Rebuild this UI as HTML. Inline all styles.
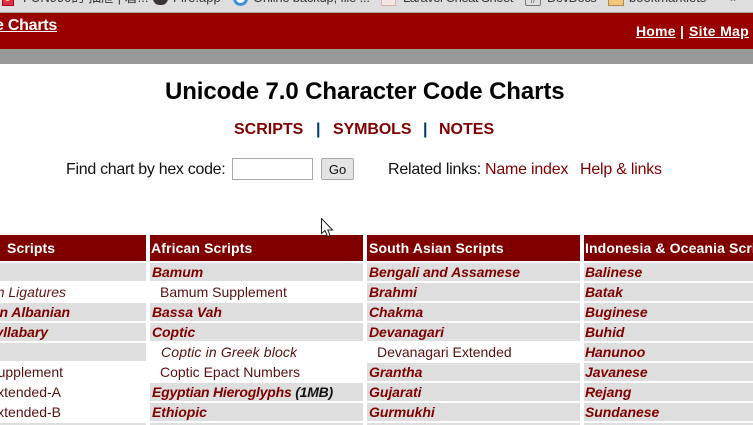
<!DOCTYPE html>
<html><head><meta charset="utf-8"><style>
html,body{margin:0;padding:0;width:753px;height:425px;overflow:hidden;background:#fff;position:relative;font-family:"Liberation Sans",Arial,sans-serif}
.a{position:absolute;white-space:nowrap}
.bar{left:0;top:0;width:753px;height:12px;background:#dedede;border-bottom:1px solid #a9a9a9;overflow:hidden}
.bm{position:absolute;top:-10px;font:13px/16px "Liberation Sans","Noto Sans CJK KR",sans-serif;color:#333;white-space:nowrap}
.col{position:absolute;top:235px;height:190px;overflow:hidden}
.h{position:absolute;left:0;right:0;top:0;height:26px;background:#800000;color:#fff;font:bold 14px/26px "Liberation Sans",sans-serif;padding-left:2px;box-sizing:border-box;white-space:nowrap;letter-spacing:.12px}
.r{position:absolute;left:0;right:0;height:18px;font:14px/18px "Liberation Sans",sans-serif;color:#800000;white-space:nowrap;padding-left:2px;box-sizing:border-box}
.g{background:#dedede;font-weight:bold;font-style:italic;letter-spacing:-.05px}
.s{padding-left:10px;color:#5a1010}
.i{font-style:italic}
.ra{text-align:right;padding-left:0;left:-40px}
.nav{font:bold 16px/20px "Liberation Sans",sans-serif;color:#800000}
.t{font:16px/20px "Liberation Sans",sans-serif;letter-spacing:-.22px;top:160px}
</style></head><body>
<div class="a bar">
<div style="position:absolute;left:2px;top:-5px;width:10px;height:9px;background:#d8304a;border:1px solid #a02"></div>
<div style="position:absolute;left:5px;top:-3px;width:5px;height:4px;border-radius:50%;background:#e8d890"></div>
<div class="bm" style="left:23px">FUN990的 抽屉 | 着...</div>
<div style="position:absolute;left:153px;top:-8px;width:15px;height:13px;border-radius:8px;background:#3a3533"></div>
<div class="bm" style="left:173px">Fire.app</div>
<div style="position:absolute;left:233px;top:-9px;width:9px;height:9px;border-radius:50%;border:3px solid #3d8fdc;background:#fff"></div>
<div class="bm" style="left:253px;letter-spacing:-.2px">Online backup, file ...</div>
<div style="position:absolute;left:381px;top:-3px;width:13px;height:7px;background:#f4e6e2;border:1px solid #d9b0a8"></div>
<div class="bm" style="left:403px;letter-spacing:-.45px">Laravel Cheat Sheet</div>
<div style="position:absolute;left:525px;top:-4px;width:14px;height:8px;border:1px solid #777;border-radius:2px;font:8px/8px sans-serif;color:#555;text-align:center">//</div>
<div class="bm" style="left:547px;letter-spacing:-.5px">DevDocs</div>
<div style="position:absolute;left:608px;top:-3px;width:14px;height:7px;background:#f4c77e;border:1px solid #b08a4a"></div>
<div class="bm" style="left:629px">bookmarklets</div>
<div class="bm" style="left:730px;color:#666">»</div>
</div>
<div class="a" style="left:0;top:13px;width:753px;height:36px;background:#990000"></div>
<div class="a" style="left:0;top:49px;width:753px;height:15px;background:#999"></div>
<div class="a" style="left:-5px;top:16px;font:bold 16px/20px 'Liberation Sans',sans-serif;color:#fff;text-decoration:underline;letter-spacing:-.25px">e Charts</div>
<div class="a" style="left:636px;top:22px;font:bold 14px/18px 'Liberation Sans',sans-serif;color:#fff;text-decoration:underline;letter-spacing:.2px">Home</div>
<div class="a" style="left:680px;top:22px;font:bold 14px/18px 'Liberation Sans',sans-serif;color:#fff">|</div>
<div class="a" style="left:689px;top:22px;font:bold 14px/18px 'Liberation Sans',sans-serif;color:#fff;text-decoration:underline;letter-spacing:.3px">Site Map</div>
<div class="a" style="left:165px;top:77px;font:bold 24px/30px 'Liberation Sans',sans-serif;color:#000;letter-spacing:-.1px">Unicode 7.0 Character Code Charts</div>
<div class="a nav" style="left:234px;top:120px">SCRIPTS</div>
<div class="a nav" style="left:316px;top:120px;color:#003a6e">|</div>
<div class="a nav" style="left:333px;top:120px;letter-spacing:-.1px">SYMBOLS</div>
<div class="a nav" style="left:423px;top:120px;color:#003a6e">|</div>
<div class="a nav" style="left:439px;top:120px">NOTES</div>
<div class="a t" style="left:66px;color:#111;letter-spacing:-.3px">Find chart by hex code:</div>
<div class="a" style="left:232px;top:158px;width:79px;height:20px;border:1px solid #a9a9a9;background:#fff"></div>
<div class="a" style="left:321px;top:158px;width:31px;height:20px;border:1px solid #aaa;border-radius:2px;background:#e4e4e4;font:13px/22px 'Liberation Sans',sans-serif;color:#111;text-align:center">Go</div>
<div class="a t" style="left:388px;color:#111">Related links:</div>
<div class="a t" style="left:485px;color:#800000">Name index</div>
<div class="a t" style="left:580px;color:#800000">Help &amp; links</div>

<div class="col" style="left:0;width:146px">
<div class="h"></div>
<div class="a" style="left:7px;top:0;font:bold 14px/26px 'Liberation Sans',sans-serif;color:#fff;letter-spacing:.1px">Scripts</div>
<div class="r g" style="top:28px"></div>
<div class="r i ra" style="top:48px;padding-right:80px;color:#6a1414">n Ligatures</div>
<div class="r g ra" style="top:68px;padding-right:76px">n Albanian</div>
<div class="r g ra" style="top:88px;padding-right:98px">yllabary</div>
<div class="r g" style="top:108px"></div>
<div class="r ra" style="top:128px;padding-right:83px;color:#5a1010">upplement</div>
<div class="r ra" style="top:148px;padding-right:85px;color:#5a1010">xtended-A</div>
<div class="r ra" style="top:168px;padding-right:85px;color:#5a1010">xtended-B</div>
<div class="r g" style="top:188px"></div>
</div>

<div class="col" style="left:150px;width:213px">
<div class="h" style="padding-left:1px">African Scripts</div>
<div class="r g" style="top:28px">Bamum</div>
<div class="r s" style="top:48px">Bamum Supplement</div>
<div class="r g" style="top:68px">Bassa Vah</div>
<div class="r g" style="top:88px">Coptic</div>
<div class="r s i" style="top:108px;padding-left:11px;letter-spacing:.15px">Coptic in Greek block</div>
<div class="r s" style="top:128px">Coptic Epact Numbers</div>
<div class="r g" style="top:148px;letter-spacing:-.22px">Egyptian Hieroglyphs <span style="color:#111">(1MB)</span></div>
<div class="r g" style="top:168px">Ethiopic</div>
<div class="r g" style="top:188px"></div>
</div>

<div class="col" style="left:367px;width:213px">
<div class="h">South Asian Scripts</div>
<div class="r g" style="top:28px">Bengali and Assamese</div>
<div class="r g" style="top:48px">Brahmi</div>
<div class="r g" style="top:68px">Chakma</div>
<div class="r g" style="top:88px">Devanagari</div>
<div class="r s" style="top:108px">Devanagari Extended</div>
<div class="r g" style="top:128px">Grantha</div>
<div class="r g" style="top:148px">Gujarati</div>
<div class="r g" style="top:168px">Gurmukhi</div>
<div class="r g" style="top:188px"></div>
</div>

<div class="col" style="left:584px;width:169px">
<div class="h" style="padding-left:1px">Indonesia &amp; Oceania Scripts</div>
<div class="r g" style="top:28px;padding-left:1px">Balinese</div>
<div class="r g" style="top:48px;padding-left:1px">Batak</div>
<div class="r g" style="top:68px;padding-left:1px">Buginese</div>
<div class="r g" style="top:88px;padding-left:1px">Buhid</div>
<div class="r g" style="top:108px;padding-left:1px">Hanunoo</div>
<div class="r g" style="top:128px;padding-left:1px">Javanese</div>
<div class="r g" style="top:148px;padding-left:1px">Rejang</div>
<div class="r g" style="top:168px;padding-left:1px">Sundanese</div>
<div class="r g" style="top:188px"></div>
</div>

<svg class="a" style="left:321px;top:218px" width="14" height="20" viewBox="0 0 14 20"><path d="M.5.5V15.5L4 12.5 6.5 18.5 9 17.5 6.8 12H11.5Z" fill="#fff" stroke="#222" stroke-width="1"/></svg>
</body></html>
